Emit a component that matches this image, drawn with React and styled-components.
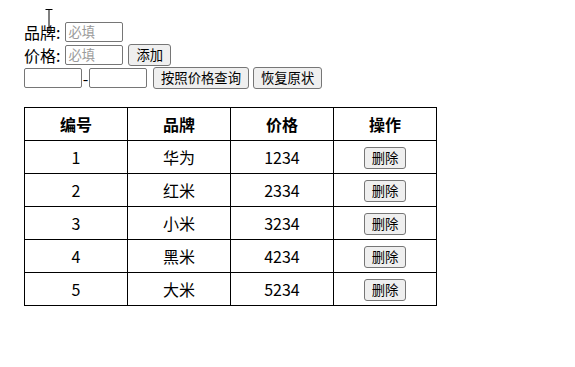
import React, { useState } from "react";
import styled, { createGlobalStyle } from "styled-components";

const Global = createGlobalStyle`
  html, body { margin: 0; padding: 0; background: #fff; }
  body { font-family: "Noto Sans CJK SC", "Noto Sans", sans-serif; color: #000; }
`;

const Page = styled.div`
  position: relative;
  padding: 20px 24px;
  font-size: 16px;
`;

const Row = styled.div`
  display: flex;
  align-items: center;
  height: 23px;
`;

const Label = styled.span`
  font-size: 16px;
  line-height: 20px;
  margin-right: 5px;
`;

const Input = styled.input`
  box-sizing: border-box;
  width: 58px;
  height: 20px;
  padding: 0 2px;
  border: 1px solid #767676;
  border-radius: 2px;
  font-family: "Noto Sans CJK SC", sans-serif;
  font-size: 13.33px;
  line-height: 16px;
  background: #fff;
  outline: none;
  &::placeholder { color: #9a9a9a; }
`;

const Dash = styled.span`
  font-size: 16px;
  line-height: 20px;
  width: 7px;
  text-align: center;
`;

const Button = styled.button`
  box-sizing: border-box;
  height: 22px;
  padding: 0 ${p => p.$pad || 7}px;
  margin-left: ${p => p.$ml || 0}px;
  border: 1px solid #767676;
  border-radius: 3px;
  background: #efefef;
  font-family: "Noto Sans CJK SC", sans-serif;
  font-size: 13.33px;
  line-height: 18px;
  color: #000;
  white-space: nowrap;
`;

const Table = styled.table`
  margin-top: 18px;
  border-collapse: collapse;
  width: 413px;
  table-layout: fixed;
`;

const Th = styled.th`
  border: 1px solid #000;
  height: 32px;
  padding: 0;
  font-size: 16px;
  font-weight: bold;
  line-height: 20px;
  text-align: center;
`;

const Td = styled.td`
  border: 1px solid #000;
  height: 32px;
  padding: 0;
  font-size: 16px;
  line-height: 20px;
  text-align: center;
  vertical-align: middle;
`;

const Cursor = styled.svg`
  position: absolute;
  left: 44px;
  top: 8px;
`;

const initial = [
  { id: 1, brand: "华为", price: 1234 },
  { id: 2, brand: "红米", price: 2334 },
  { id: 3, brand: "小米", price: 3234 },
  { id: 4, brand: "黑米", price: 4234 },
  { id: 5, brand: "大米", price: 5234 },
];

export default function App() {
  const [rows] = useState(initial);
  return (
    <Page>
      <Global />
      <Row>
        <Label>品牌:</Label>
        <Input placeholder="必填" />
      </Row>
      <Row>
        <Label>价格:</Label>
        <Input placeholder="必填" />
        <Button $ml={5}>添加</Button>
      </Row>
      <Row>
        <Input />
        <Dash>-</Dash>
        <Input />
        <Button $ml={6}>按照价格查询</Button>
        <Button $ml={4}>恢复原状</Button>
      </Row>
      <Table>
        <thead>
          <tr>
            <Th>编号</Th>
            <Th>品牌</Th>
            <Th>价格</Th>
            <Th>操作</Th>
          </tr>
        </thead>
        <tbody>
          {rows.map(r => (
            <tr key={r.id}>
              <Td>{r.id}</Td>
              <Td>{r.brand}</Td>
              <Td>{r.price}</Td>
              <Td><Button>删除</Button></Td>
            </tr>
          ))}
        </tbody>
      </Table>
      <Cursor width="10" height="24" viewBox="0 0 10 24">
        <path d="M1.5 1.5 H8.5 M5 1.5 V22" stroke="#000" strokeWidth="1" fill="none" />
      </Cursor>
    </Page>
  );
}
